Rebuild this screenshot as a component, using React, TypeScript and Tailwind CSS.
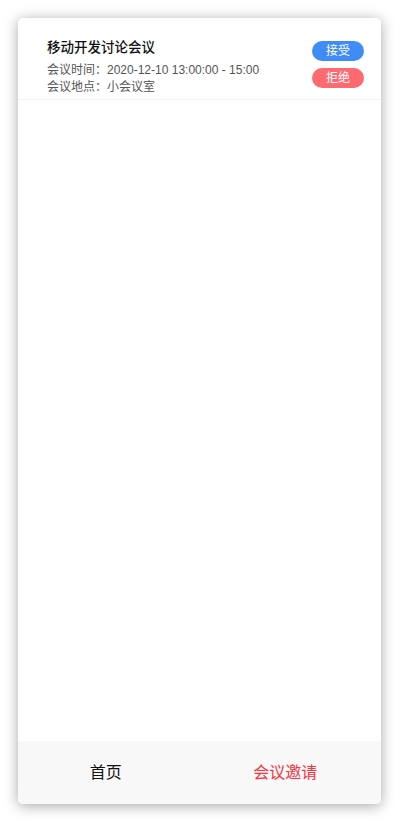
import React from "react";

export default function App() {
  return (
    <div className="w-[400px] h-[823px] bg-white pt-[18px] pl-[18px]" style={{ fontFamily: '"Liberation Sans","Noto Sans CJK SC",sans-serif' }}>
      <div className="w-[363px] h-[786px] bg-white rounded-[5px] shadow-[0_2px_14px_rgba(0,0,0,0.35)] flex flex-col overflow-hidden">
        <div className="flex flex-col flex-1">
          <div className="flex justify-between border-b border-[#f2f2f2] pl-[29px] pr-[17px] h-[82px]">
            <div className="flex flex-col pt-[20px]">
              <div className="text-[13.5px] leading-[20px] font-medium text-[#111]">移动开发讨论会议</div>
              <div className="text-[12px] leading-[18px] text-[#555] mt-[3px]">会议时间：2020-12-10 13:00:00 - 15:00</div>
              <div className="text-[12px] leading-[17px] text-[#555]">会议地点：小会议室</div>
            </div>
            <div className="flex flex-col gap-[7px] pt-[23px]">
              <div className="w-[52px] h-[20px] rounded-full bg-[#3f8cf6] text-white text-[12px] flex items-center justify-center">接受</div>
              <div className="w-[52px] h-[20px] rounded-full bg-[#fd6a70] text-white text-[12px] flex items-center justify-center">拒绝</div>
            </div>
          </div>
        </div>
        <div className="h-[63px] bg-[#f8f8f8] flex items-center">
          <div className="flex-1 text-center text-[16px] text-[#111] pr-[4px]">首页</div>
          <div className="flex-1 text-center text-[16px] text-[#f8323f] pr-[8px]">会议邀请</div>
        </div>
      </div>
    </div>
  );
}
